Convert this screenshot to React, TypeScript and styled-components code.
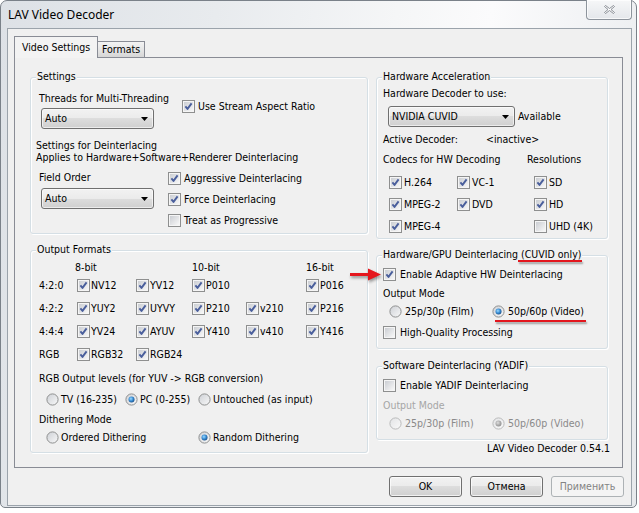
import React, { useId } from "react";
import styled, { createGlobalStyle, css } from "styled-components";

const GlobalStyle = createGlobalStyle`
  * { box-sizing: border-box; }
  html, body { margin: 0; padding: 0; background: #ffffff; }
  body {
    font-family: "DejaVu Sans Condensed", "DejaVu Sans", sans-serif;
    font-stretch: condensed;
    font-size: 10.5px;
    line-height: 13px;
    color: #000;
  }
`;

const Window = styled.div`
  width: 637px;
  height: 508px;
  border: 1px solid #7a8189;
  border-radius: 7px 7px 5px 5px;
  background: linear-gradient(100deg, #dde1e6 0%, #e8ebee 30%, #f5f6f7 55%, #fbfbfc 68%, #e6e9ec 100%);
  display: flex;
  flex-direction: column;
  padding: 0 4px 1px 6px;
`;

const TitleBar = styled.div`
  height: 27px;
  display: flex;
  justify-content: space-between;
  align-items: flex-start;
`;

const Title = styled.div`
  font-family: "Noto Sans", "Open Sans", sans-serif;
  font-stretch: normal;
  font-size: 12px;
  line-height: 16px;
  padding: 6px 0 0 1px;
  color: #000;
`;

const CloseButton = styled.div`
  width: 46px;
  height: 20px;
  margin-top: -1px;
  border: 1px solid #8d949c;
  border-top: none;
  border-radius: 0 0 4px 4px;
  background: linear-gradient(#f6f7f8, #e4e7eb);
  box-shadow: inset 0 0 0 1px rgba(255, 255, 255, 0.7);
  display: flex;
  align-items: center;
  justify-content: center;
`;

const Client = styled.div`
  flex: 1;
  background: #f0f0f0;
  border: 1px solid #9ba3ab;
  padding: 7px 6px 0 6px;
  display: flex;
  flex-direction: column;
`;

const TabStrip = styled.div`
  display: flex;
  align-items: flex-end;
  height: 21px;
`;

const Tab = styled.div<{ $active?: boolean }>`
  position: relative;
  white-space: nowrap;
  border: 1px solid #898c95;
  border-bottom: none;
  ${(p) =>
    p.$active
      ? css`
          width: 84px;
          height: 22px;
          margin-bottom: -1px;
          z-index: 1;
          background: #f3f3f3;
          padding: 4px 0 0 7px;
        `
      : css`
          width: 47px;
          height: 16px;
          border-left: none;
          background: linear-gradient(#f3f3f3, #e6e6e6 50%, #d6d6d6);
          padding: 1px 0 0 4px;
        `}
`;

const Panel = styled.div`
  width: 609px;
  height: 411px;
  border: 1px solid #898c95;
  background: #f0f0f0;
  display: flex;
  gap: 8px;
  padding: 19px 14px 0 15px;
`;

const Column = styled.div<{ $w: number }>`
  width: ${(p) => p.$w}px;
  flex-shrink: 0;
  display: flex;
  flex-direction: column;
`;

const Group = styled.div<{ $h: number; $pt: number; $pl: number; $mt?: number }>`
  position: relative;
  height: ${(p) => p.$h}px;
  margin-top: ${(p) => p.$mt ?? 0}px;
  border: 1px solid #d5dfe5;
  border-radius: 3px;
  box-shadow: inset 1px 1px 0 #ffffff, 1px 1px 0 #ffffff;
  padding: ${(p) => p.$pt}px 0 0 ${(p) => p.$pl}px;
  display: flex;
  flex-direction: column;
  align-items: flex-start;
`;

const Legend = styled.span`
  position: absolute;
  top: -8px;
  left: 5px;
  padding: 0 1px;
  background: #f0f0f0;
  line-height: 13px;
  white-space: nowrap;
`;

const Marked = styled.span`
  position: relative;
  &::after {
    content: "";
    position: absolute;
    left: -3px;
    right: -1px;
    top: 12px;
    height: 2px;
    background: #e3161d;
    box-shadow: 1px 2px 2px rgba(0, 0, 0, 0.35);
  }
`;

const Label = styled.div<{ $mt?: number; $ml?: number; $lh?: number; $disabled?: boolean }>`
  line-height: ${(p) => p.$lh ?? 13}px;
  margin-top: ${(p) => p.$mt ?? 0}px;
  margin-left: ${(p) => p.$ml ?? 0}px;
  white-space: nowrap;
  color: ${(p) => (p.$disabled ? "#a6a6a6" : "#000")};
`;

const Row = styled.div<{ $mt?: number; $center?: boolean }>`
  display: flex;
  align-items: ${(p) => (p.$center ? "center" : "flex-start")};
  margin-top: ${(p) => p.$mt ?? 0}px;
`;

const Stack = styled.div<{ $w: number; $pl: number }>`
  width: ${(p) => p.$w}px;
  padding-left: ${(p) => p.$pl}px;
  display: flex;
  flex-direction: column;
  align-items: flex-start;
  flex-shrink: 0;
`;

const CheckColumn = styled.div<{ $mt?: number }>`
  display: flex;
  flex-direction: column;
  margin-top: ${(p) => p.$mt ?? 0}px;
`;

const Grid = styled.div<{ $cols: string; $rows: string; $mt?: number; $pl?: number }>`
  display: grid;
  grid-template-columns: ${(p) => p.$cols};
  grid-template-rows: ${(p) => p.$rows};
  align-items: center;
  margin-top: ${(p) => p.$mt ?? 0}px;
  padding-left: ${(p) => p.$pl ?? 0}px;
  white-space: nowrap;
`;

const ColHeader = styled.div<{ $ml?: number }>`
  margin-left: ${(p) => p.$ml ?? 0}px;
  line-height: 13px;
`;

const OptionLabel = styled.div<{ $gap: number; $h: number; $mt?: number; $disabled?: boolean; $mark?: boolean }>`
  position: relative;
  display: flex;
  align-items: center;
  gap: ${(p) => p.$gap}px;
  height: ${(p) => p.$h}px;
  margin-top: ${(p) => p.$mt ?? 0}px;
  white-space: nowrap;
  color: ${(p) => (p.$disabled ? "#8a8a8a" : "#000")};
  svg { flex-shrink: 0; }
  ${(p) =>
    p.$mark &&
    css`
      &::after {
        content: "";
        position: absolute;
        left: 3px;
        right: -2px;
        top: ${p.$h / 2 + 8}px;
        height: 2px;
        background: #e3161d;
        box-shadow: 1px 2px 2px rgba(0, 0, 0, 0.35);
      }
    `}
`;

const SelectBox = styled.div<{ $w: number; $mt?: number; $ml?: number }>`
  width: ${(p) => p.$w}px;
  height: 21px;
  margin-top: ${(p) => p.$mt ?? 0}px;
  margin-left: ${(p) => p.$ml ?? 0}px;
  border: 1px solid #707070;
  border-radius: 3px;
  background: linear-gradient(#f2f2f2 0%, #ebebeb 50%, #dddddd 50%, #cfcfcf 100%);
  box-shadow: inset 0 0 0 1px rgba(255, 255, 255, 0.6);
  display: flex;
  align-items: center;
  justify-content: space-between;
  padding: 0 5px 0 3px;
  white-space: nowrap;
  flex-shrink: 0;
`;

const ArrowOverlay = styled.svg`
  position: absolute;
  left: -27px;
  top: 11px;
  filter: drop-shadow(1px 2px 1.5px rgba(0, 0, 0, 0.4));
`;

const Version = styled.div`
  margin-top: 1.5px;
  margin-right: -2px;
  text-align: right;
  line-height: 13px;
`;

const ButtonRow = styled.div`
  display: flex;
  justify-content: flex-end;
  gap: 8px;
  margin-top: 8px;
  padding-right: 1px;
`;

const Button = styled.div<{ $disabled?: boolean }>`
  width: 73px;
  height: 21px;
  border-radius: 3px;
  display: flex;
  align-items: center;
  justify-content: center;
  ${(p) =>
    p.$disabled
      ? css`
          border: 1px solid #adb2b5;
          background: #f4f4f4;
          color: #838383;
        `
      : css`
          border: 1px solid #707070;
          background: linear-gradient(#f2f2f2 0%, #ebebeb 50%, #dddddd 50%, #cfcfcf 100%);
          box-shadow: inset 0 0 0 1px rgba(255, 255, 255, 0.7);
          color: #000;
        `}
`;

function BoxIcon({ checked }: { checked?: boolean }) {
  const id = "cb" + useId().replace(/[^a-zA-Z0-9]/g, "");
  return (
    <svg width="13" height="13" viewBox="0 0 13 13">
      <defs>
        <linearGradient id={id} x1="0" y1="0" x2="1" y2="1">
          <stop offset="0" stopColor="#cbced3" />
          <stop offset="1" stopColor="#f7f7f7" />
        </linearGradient>
      </defs>
      <rect x="0.5" y="0.5" width="12" height="12" fill="#f5f5f5" stroke="#8e8f8f" />
      <rect x="2" y="2" width="9" height="9" fill={`url(#${id})`} />
      {checked && (
        <path d="M3.4 6.4 L5.5 8.9 L9.6 3.4" fill="none" stroke="#4a5f9c" strokeWidth="1.9" strokeLinejoin="round" />
      )}
    </svg>
  );
}

function RadioIcon({ checked, disabled }: { checked?: boolean; disabled?: boolean }) {
  const raw = useId().replace(/[^a-zA-Z0-9]/g, "");
  const g1 = "rb" + raw;
  const g2 = "rd" + raw;
  return (
    <svg width="13" height="13" viewBox="0 0 13 13">
      <defs>
        <linearGradient id={g1} x1="0" y1="0" x2="1" y2="1">
          <stop offset="0" stopColor={disabled ? "#e2e3e5" : "#cdd0d5"} />
          <stop offset="1" stopColor={disabled ? "#fafafa" : "#f9f9f9"} />
        </linearGradient>
        <radialGradient id={g2} cx="0.4" cy="0.38" r="0.7">
          <stop offset="0" stopColor={disabled ? "#e0e0e0" : "#9fdcff"} />
          <stop offset="0.5" stopColor={disabled ? "#b0b0b0" : "#3b8fd6"} />
          <stop offset="1" stopColor={disabled ? "#8c8c8c" : "#14477f"} />
        </radialGradient>
      </defs>
      <circle cx="6.5" cy="6.5" r="5.6" fill={`url(#${g1})`} stroke={disabled ? "#b9babb" : "#8e8f8f"} />
      {checked && <circle cx="6.5" cy="6.5" r="3" fill={`url(#${g2})`} />}
    </svg>
  );
}

function CheckBox({
  checked,
  children,
  gap = 3,
  h = 13,
  mt,
}: {
  checked?: boolean;
  children: React.ReactNode;
  gap?: number;
  h?: number;
  mt?: number;
}) {
  return (
    <OptionLabel $gap={gap} $h={h} $mt={mt}>
      <BoxIcon checked={checked} />
      <span>{children}</span>
    </OptionLabel>
  );
}

function Radio({
  checked,
  disabled,
  mark,
  children,
  gap = 3,
}: {
  checked?: boolean;
  disabled?: boolean;
  mark?: boolean;
  children: React.ReactNode;
  gap?: number;
}) {
  return (
    <OptionLabel $gap={gap} $h={13} $disabled={disabled} $mark={mark}>
      <RadioIcon checked={checked} disabled={disabled} />
      <span>{children}</span>
    </OptionLabel>
  );
}

function Select({ value, w, mt, ml }: { value: string; w: number; mt?: number; ml?: number }) {
  return (
    <SelectBox $w={w} $mt={mt} $ml={ml}>
      <span>{value}</span>
      <svg width="7" height="4" viewBox="0 0 7 4">
        <path d="M0 0 H7 L3.5 4 Z" fill="#000" />
      </svg>
    </SelectBox>
  );
}

const formatRows: { label: string; items: (string | null)[] }[] = [
  { label: "4:2:0", items: ["NV12", "YV12", "P010", null, "P016"] },
  { label: "4:2:2", items: ["YUY2", "UYVY", "P210", "v210", "P216"] },
  { label: "4:4:4", items: ["YV24", "AYUV", "Y410", "v410", "Y416"] },
  { label: "RGB", items: ["RGB32", "RGB24", null, null, null] },
];

const codecRows: [string, string | null, string, boolean][] = [
  ["H.264", "VC-1", "SD", true],
  ["MPEG-2", "DVD", "HD", true],
  ["MPEG-4", null, "UHD (4K)", false],
];

export default function App() {
  return (
    <>
      <GlobalStyle />
      <Window>
        <TitleBar>
          <Title>LAV Video Decoder</Title>
          <CloseButton>
            <svg width="11" height="9" viewBox="0 0 11 9">
              <path
                d="M0.5 1.5 L1.5 0.5 L5.5 3.5 L9.5 0.5 L10.5 1.5 L7 4.5 L10.5 7.5 L9.5 8.5 L5.5 5.5 L1.5 8.5 L0.5 7.5 L4 4.5 Z"
                fill="#ffffff"
                stroke="#7f858c"
                strokeWidth="0.9"
                strokeLinejoin="round"
              />
            </svg>
          </CloseButton>
        </TitleBar>
        <Client>
          <TabStrip>
            <Tab $active>Video Settings</Tab>
            <Tab>Formats</Tab>
          </TabStrip>
          <Panel>
            <Column $w={338}>
              <Group $h={157} $pt={14} $pl={5}>
                <Legend>Settings</Legend>
                <Row>
                  <Stack $w={146} $pl={3}>
                    <Label>Threads for Multi-Threading</Label>
                    <Select value="Auto" w={113} mt={3} ml={2} />
                  </Stack>
                  <CheckBox checked mt={8}>
                    Use Stream Aspect Ratio
                  </CheckBox>
                </Row>
                <Label $mt={9.5} $lh={12}>
                  Settings for Deinterlacing
                </Label>
                <Label $lh={12}>Applies to Hardware+Software+Renderer Deinterlacing</Label>
                <Row $mt={8}>
                  <Stack $w={132} $pl={3}>
                    <Label>Field Order</Label>
                    <Select value="Auto" w={113} mt={4.5} ml={2} />
                  </Stack>
                  <CheckColumn $mt={-3}>
                    <CheckBox checked h={21}>
                      Aggressive Deinterlacing
                    </CheckBox>
                    <CheckBox checked h={21}>
                      Force Deinterlacing
                    </CheckBox>
                    <CheckBox h={21}>Treat as Progressive</CheckBox>
                  </CheckColumn>
                </Row>
              </Group>

              <Group $h={203} $pt={10} $pl={8} $mt={16}>
                <Legend>Output Formats</Legend>
                <Grid $cols="38px 59px 56px 54px 60px 1fr" $rows="13px repeat(4, 23px)">
                  <span />
                  <ColHeader $ml={-2}>8-bit</ColHeader>
                  <span />
                  <ColHeader>10-bit</ColHeader>
                  <span />
                  <ColHeader>16-bit</ColHeader>
                  {formatRows.map((r) => (
                    <React.Fragment key={r.label}>
                      <span>{r.label}</span>
                      {r.items.map((it, i) =>
                        it ? (
                          <CheckBox key={i} checked gap={1}>
                            {it}
                          </CheckBox>
                        ) : (
                          <span key={i} />
                        )
                      )}
                    </React.Fragment>
                  ))}
                </Grid>
                <Label $mt={6}>RGB Output levels (for YUV -&gt; RGB conversion)</Label>
                <Grid $cols="79px 73px auto" $rows="13px" $mt={8} $pl={7}>
                  <Radio gap={2}>TV (16-235)</Radio>
                  <Radio gap={2} checked>
                    PC (0-255)
                  </Radio>
                  <Radio gap={2}>Untouched (as input)</Radio>
                </Grid>
                <Label $mt={7}>Dithering Mode</Label>
                <Grid $cols="152px auto" $rows="13px" $mt={5} $pl={7}>
                  <Radio gap={2}>Ordered Dithering</Radio>
                  <Radio gap={2} checked>
                    Random Dithering
                  </Radio>
                </Grid>
              </Group>
            </Column>

            <Column $w={232}>
              <Group $h={162} $pt={9} $pl={6}>
                <Legend>Hardware Acceleration</Legend>
                <Label>Hardware Decoder to use:</Label>
                <Row $mt={6} $center>
                  <Select value="NVIDIA CUVID" w={127} ml={5} />
                  <Label $ml={3}>Available</Label>
                </Row>
                <Grid $cols="103px auto" $rows="13px" $mt={6}>
                  <span>Active Decoder:</span>
                  <span>&lt;inactive&gt;</span>
                </Grid>
                <Grid $cols="144px auto" $rows="13px" $mt={7}>
                  <span>Codecs for HW Decoding</span>
                  <span>Resolutions</span>
                </Grid>
                <Grid $cols="68px 77px auto" $rows="repeat(3, 22px)" $mt={5} $pl={6}>
                  {codecRows.map(([a, b, c, cc]) => (
                    <React.Fragment key={a}>
                      <CheckBox checked gap={2}>
                        {a}
                      </CheckBox>
                      {b ? (
                        <CheckBox checked gap={2}>
                          {b}
                        </CheckBox>
                      ) : (
                        <span />
                      )}
                      <CheckBox checked={cc} gap={2}>
                        {c}
                      </CheckBox>
                    </React.Fragment>
                  ))}
                </Grid>
              </Group>

              <Group $h={94} $pt={12} $pl={6} $mt={16}>
                <Legend>
                  Hardware/GPU Deinterlacing <Marked>(CUVID only)</Marked>
                </Legend>
                <ArrowOverlay width="32" height="15" viewBox="0 0 32 15">
                  <path d="M0 6 H18 V1.5 L31 7.5 L18 13.5 V9 H0 Z" fill="#e5161d" />
                </ArrowOverlay>
                <CheckBox checked gap={4}>
                  Enable Adaptive HW Deinterlacing
                </CheckBox>
                <Label $mt={6}>Output Mode</Label>
                <Grid $cols="103px auto" $rows="13px" $mt={5} $pl={6}>
                  <Radio>25p/30p (Film)</Radio>
                  <Radio checked mark>
                    50p/60p (Video)
                  </Radio>
                </Grid>
                <CheckBox gap={4} mt={8}>
                  High-Quality Processing
                </CheckBox>
              </Group>

              <Group $h={74} $pt={12} $pl={6} $mt={17}>
                <Legend>Software Deinterlacing (YADIF)</Legend>
                <CheckBox gap={4}>Enable YADIF Deinterlacing</CheckBox>
                <Label $mt={7} $disabled>
                  Output Mode
                </Label>
                <Grid $cols="103px auto" $rows="13px" $mt={5} $pl={6}>
                  <Radio disabled>25p/30p (Film)</Radio>
                  <Radio disabled checked>
                    50p/60p (Video)
                  </Radio>
                </Grid>
              </Group>
              <Version>LAV Video Decoder 0.54.1</Version>
            </Column>
          </Panel>
          <ButtonRow>
            <Button>OK</Button>
            <Button>Отмена</Button>
            <Button $disabled>Применить</Button>
          </ButtonRow>
        </Client>
      </Window>
    </>
  );
}
